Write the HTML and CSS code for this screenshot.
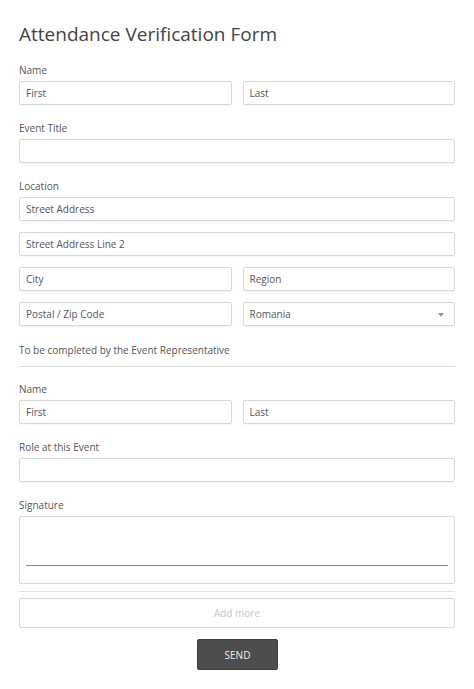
FILE: index.html
```html
<!DOCTYPE html>
<html>
<head>
<meta charset="utf-8">
<link rel="stylesheet" href="styles.css">
</head>
<body>
<main class="form">
  <h1 class="title">Attendance Verification Form</h1>

  <div class="group">
    <div class="label">Name</div>
    <div class="row">
      <div class="input">First</div>
      <div class="input">Last</div>
    </div>
  </div>

  <div class="group">
    <div class="label">Event Title</div>
    <div class="input"></div>
  </div>

  <div class="group">
    <div class="label">Location</div>
    <div class="stack">
      <div class="input">Street Address</div>
      <div class="input">Street Address Line 2</div>
      <div class="row">
        <div class="input">City</div>
        <div class="input">Region</div>
      </div>
      <div class="row">
        <div class="input">Postal / Zip Code</div>
        <div class="input select">Romania<span class="caret"></span></div>
      </div>
    </div>
  </div>

  <div class="section">To be completed by the Event Representative</div>

  <div class="group first">
    <div class="label">Name</div>
    <div class="row">
      <div class="input">First</div>
      <div class="input">Last</div>
    </div>
  </div>

  <div class="group">
    <div class="label">Role at this Event</div>
    <div class="input"></div>
  </div>

  <div class="group">
    <div class="label">Signature</div>
    <div class="signature"><div class="sigline"></div></div>
  </div>

  <div class="divider"></div>
  <div class="addmore">Add more</div>

  <div class="actions"><button class="send">SEND</button></div>
</main>
</body>
</html>
```

FILE: styles.css
```css
* { box-sizing: border-box; }
html, body { margin: 0; padding: 0; background: #fff; }
body {
  font-family: "Open Sans", "Liberation Sans", sans-serif;
  color: #555;
}
.form {
  width: 436px;
  margin-left: 19px;
  padding-top: 20px;
}
.title {
  margin: 0;
  font-size: 19px;
  font-weight: 400;
  line-height: 28px;
  color: #444;
}
.group { margin-top: 16px; }
.group.first { margin-top: 15px; }
.form > .title + .group { margin-top: 15px; }
.label {
  font-size: 10px;
  line-height: 14px;
  height: 14px;
  color: #555;
  margin-bottom: 4px;
}
.row {
  display: grid;
  grid-template-columns: 1fr 1fr;
  column-gap: 11px;
}
.stack {
  display: flex;
  flex-direction: column;
  gap: 11px;
}
.input {
  height: 24px;
  border: 1px solid #d8d8d8;
  border-radius: 2px;
  box-shadow: 0 1px 1px rgba(0,0,0,0.04);
  font-size: 10px;
  line-height: 22px;
  padding-left: 6px;
  color: #555;
  position: relative;
}
.caret {
  position: absolute;
  right: 10px;
  top: 10px;
  width: 0;
  height: 0;
  border-left: 3.5px solid transparent;
  border-right: 3.5px solid transparent;
  border-top: 4px solid #999;
}
.section {
  margin-top: 17px;
  font-size: 10px;
  line-height: 14px;
  padding-bottom: 9px;
  border-bottom: 1px solid #ddd;
}
.signature {
  height: 68px;
  border: 1px solid #d8d8d8;
  border-radius: 2px;
  padding: 48px 6px 0 6px;
}
.sigline {
  height: 1px;
  background: #888;
}
.divider {
  margin-top: 7px;
  height: 1px;
  background: #e2e2e2;
}
.addmore {
  margin-top: 6px;
  height: 30px;
  border: 1px solid #d8d8d8;
  border-radius: 2px;
  text-align: center;
  font-size: 10px;
  line-height: 28px;
  color: #c8c8c8;
}
.actions {
  display: flex;
  justify-content: center;
  margin-top: 11px;
}
.send {
  width: 81px;
  height: 31px;
  background: #4d4d4d;
  border: 1px solid #3f3f3f;
  border-radius: 2px;
  color: #eee;
  font-family: "Open Sans", "Liberation Sans", sans-serif;
  font-size: 10px;
  padding: 0;
  margin-left: 1px;
}
```
